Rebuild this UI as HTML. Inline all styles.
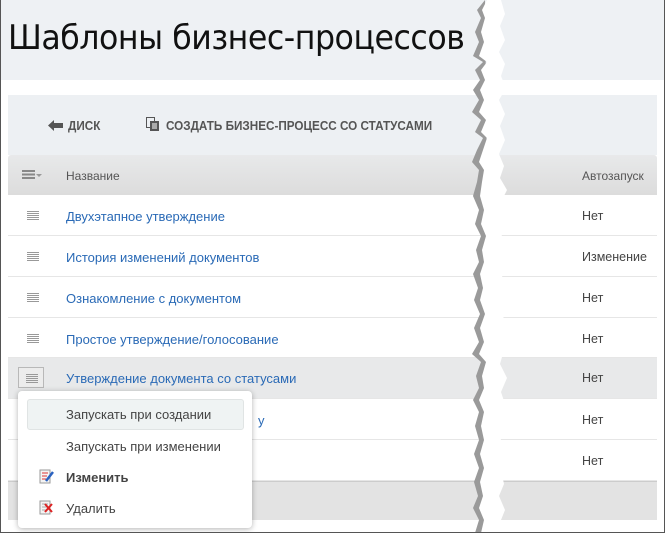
<!DOCTYPE html>
<html><head><meta charset="utf-8"><style>
*{margin:0;padding:0;box-sizing:border-box}
body{width:665px;height:533px;overflow:hidden;background:#fff;font-family:"Liberation Sans",sans-serif;position:relative}
.abs{position:absolute}
#frame{position:absolute;left:0;top:0;width:665px;height:533px;border:1px solid #555;border-top:none;z-index:50;pointer-events:none}
.top{left:0;top:0;width:665px;height:80px;background:#eef1f4}
h1{position:absolute;left:8px;top:18px;font-weight:normal;font-size:34px;color:#111;font-family:"DejaVu Sans","Liberation Sans",sans-serif;letter-spacing:-0.5px;transform:scaleX(0.93);transform-origin:left}
.tb{left:8px;top:95px;width:649px;height:60px;background:#edf0f3}
.tbt{font-size:13px;font-weight:bold;color:#555;top:118px;transform:scaleX(0.9);transform-origin:left;white-space:nowrap}
.hdr{left:8px;top:155px;width:649px;height:40px;background:linear-gradient(#e8e9ea,#dcdcdc);border-radius:3px 3px 0 0}
.ht{font-size:12px;color:#555;top:169px}
.row{left:8px;width:649px;height:41px;border-bottom:1px solid #e6e6e6;background:#fff}
.lnk{font-size:13px;color:#2a6ab6;position:absolute;left:58px;top:14px;white-space:nowrap}
.val{font-size:12.5px;color:#444;position:absolute;left:574px;top:14px}
.ham{position:absolute;left:19px;top:16px;width:12px;height:9px;background:repeating-linear-gradient(#999 0 1px,transparent 1px 2px)}
.foot{left:8px;top:481px;width:649px;height:39px;background:#e3e3e3;border-top:1px solid #ccc}
.menu{left:18px;top:391px;width:234px;height:137px;background:#fff;border-radius:4px;box-shadow:0 1px 6px rgba(0,0,0,.3);z-index:10}
.mi{position:absolute;font-size:13px;color:#444;white-space:nowrap}
</style></head><body>
<div class="abs top"></div>
<h1>Шаблоны бизнес-процессов</h1>
<div class="abs tb"></div>
<svg class="abs" style="left:48px;top:119px" width="16" height="13"><path d="M0 6.5 L6 1 V4 H15 V9 H6 V12 Z" fill="#555"/></svg>
<div class="abs tbt" style="left:68px">ДИСК</div>
<svg class="abs" style="left:146px;top:117px" width="14" height="15"><rect x="0.5" y="0.5" width="8" height="10" fill="none" stroke="#555"/><rect x="4" y="4" width="9" height="10" fill="#555"/><path d="M6 7h5M6 9h5M6 11h5" stroke="#fff"/></svg>
<div class="abs tbt" style="left:166px">СОЗДАТЬ БИЗНЕС-ПРОЦЕСС СО СТАТУСАМИ</div>
<div class="abs hdr"></div>
<div class="abs" style="left:22px;top:170px;width:13px;height:9px;background:repeating-linear-gradient(#888 0 2px,transparent 2px 3.5px)"></div>
<div class="abs" style="left:36px;top:174px;border:3px solid transparent;border-top:3px solid #999"></div>
<div class="abs ht" style="left:66px">Название</div>
<div class="abs ht" style="left:582px">Автозапуск</div>

<div class="abs row" style="top:195px"><div class="ham"></div><div class="lnk">Двухэтапное утверждение</div><div class="val">Нет</div></div>
<div class="abs row" style="top:236px"><div class="ham"></div><div class="lnk">История изменений документов</div><div class="val">Изменение</div></div>
<div class="abs row" style="top:277px"><div class="ham"></div><div class="lnk">Ознакомление с документом</div><div class="val">Нет</div></div>
<div class="abs row" style="top:318px;height:40px"><div class="ham"></div><div class="lnk">Простое утверждение/голосование</div><div class="val">Нет</div></div>
<div class="abs row" style="top:358px;background:#e8e9ea"><div style="position:absolute;left:10px;top:9px;width:26px;height:21px;border:1px solid #b8b8b8;background:#ececec"></div><div class="ham" style="left:18px;top:16px"></div><div class="lnk" style="top:13px">Утверждение документа со статусами</div><div class="val" style="top:13px">Нет</div></div>
<div class="abs row" style="top:399px"><div class="lnk" style="left:250px">у</div><div class="val">Нет</div></div>
<div class="abs row" style="top:440px"><div class="val">Нет</div></div>
<div class="abs foot"></div>

<div class="abs menu">
 <div style="position:absolute;left:9px;top:8px;width:217px;height:31px;background:#eff3f3;border:1px solid #e0e4e4;border-radius:3px"></div>
 <div class="mi" style="left:48px;top:16px">Запускать при создании</div>
 <div class="mi" style="left:48px;top:48px">Запускать при изменении</div>
 <svg style="position:absolute;left:21px;top:78px" width="16" height="16"><rect x="1" y="1" width="10" height="13" fill="#f4f4f4" stroke="#999"/><path d="M3 4h6M3 7h5M3 10h4" stroke="#d33"/><path d="M7 12 L14 3" stroke="#2a62c0" stroke-width="2.5"/></svg>
 <div class="mi" style="left:48px;top:79px;font-weight:bold">Изменить</div>
 <svg style="position:absolute;left:21px;top:109px" width="16" height="16"><rect x="1" y="1" width="10" height="13" fill="#f4f4f4" stroke="#999"/><path d="M3 4h6M3 7h5M3 10h4" stroke="#aaa"/><path d="M6 4 L13 12 M13 4 L6 12" stroke="#d22" stroke-width="2"/></svg>
 <div class="mi" style="left:48px;top:110px">Удалить</div>
</div>

<svg class="abs" style="left:455px;top:0;z-index:20" width="60" height="533">
<path d="M30 0 L22 10 L26 18 L20 32 L24 42 L18 56 L28 62 L20 70 L25 80 L18 90 L24 100 L17 112 L26 120 L20 132 L28 138 L22 150 L17 162 L24 170 L22 182 L18 196 L24 210 L20 224 L26 236 L21 250 L24 262 L18 274 L23 288 L19 300 L25 314 L19 328 L24 342 L17 354 L26 362 L21 376 L24 388 L18 400 L24 412 L20 426 L24 440 L19 454 L24 468 L19 482 L23 496 L18 508 L24 520 L20 533 L36 533 Z" fill="#9a9a9a"/>
<path d="M32 0 L27 10 L30 18 L26 32 L29 42 L24 56 L32 62 L26 70 L30 80 L25 90 L29 100 L24 112 L31 120 L26 132 L32 138 L28 150 L24 162 L29 170 L27 182 L25 196 L29 210 L26 224 L31 236 L27 250 L29 262 L25 274 L28 288 L25 300 L30 314 L25 328 L29 342 L24 354 L31 362 L27 376 L29 388 L24 400 L29 412 L26 426 L29 440 L25 454 L29 468 L25 482 L28 496 L24 508 L29 520 L26 533 L50 533 L46 520 L50 510 L44 496 L49 484 L46 470 L51 456 L45 442 L49 430 L44 416 L50 404 L46 392 L52 378 L45 364 L49 350 L45 336 L50 322 L46 310 L49 296 L44 284 L50 270 L46 256 L51 244 L44 230 L49 218 L45 204 L52 190 L45 178 L49 166 L44 154 L50 140 L45 126 L50 114 L44 100 L51 88 L46 76 L50 64 L44 52 L50 40 L45 26 L50 14 L46 0 Z" fill="#fff"/>
</svg>
<div id="frame"></div>
</body></html>
